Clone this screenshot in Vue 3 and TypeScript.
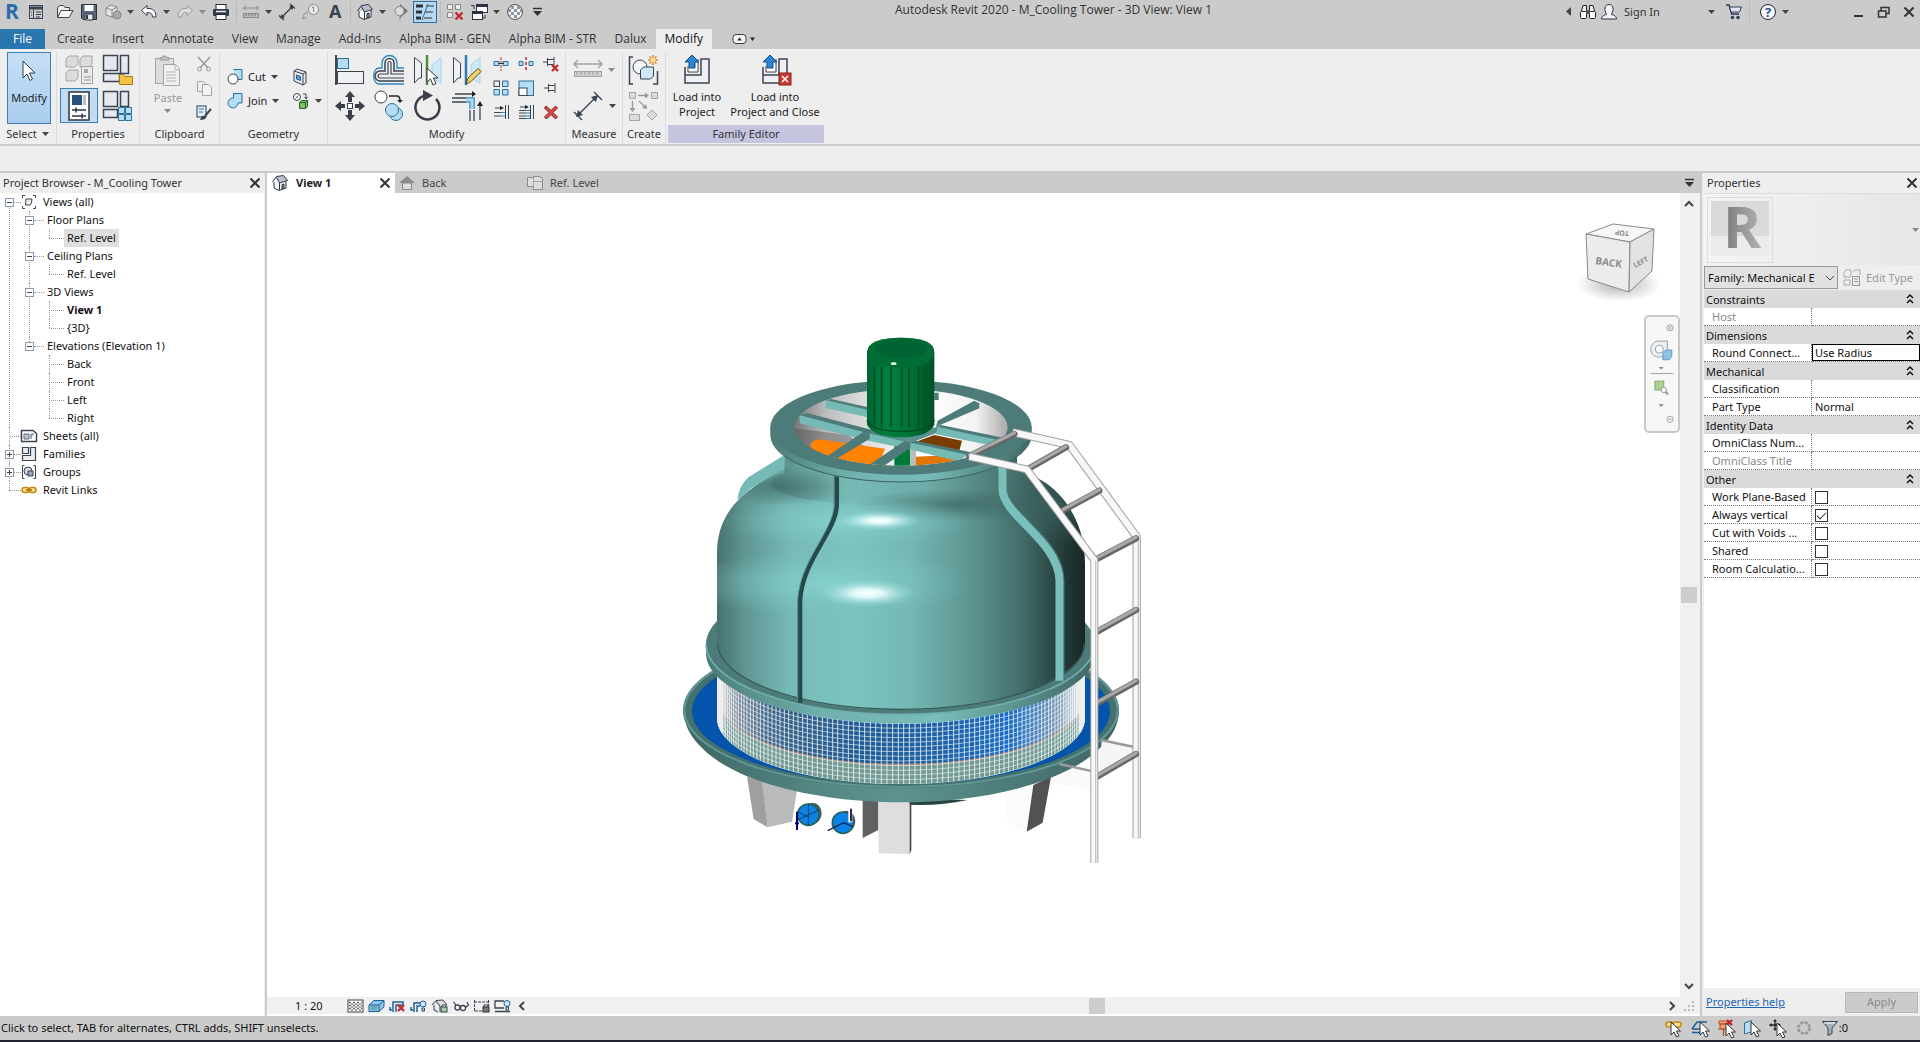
<script setup lang="ts">
import { h, ref } from 'vue'

type IconDef = [number, number, string]

const K = 'fill="none" stroke="#3b4453"'
const B = 'fill="#b4dcf2" stroke="#2b7199"'
const G = 'fill="#dcdcdc" stroke="#a4a4a4"'
const cursor = (x: number, y: number) =>
  `<path transform="translate(${x} ${y})" d="M0 0V13L3 10L5.500 15L8 14L5.500 9H9.500Z" fill="#fff" stroke="#333"/>`
const redX = (x: number, y: number, s: number) =>
  `<path d="M${x} ${y}l${s} ${s}m0 -${s}l-${s} ${s}" stroke="#c3262d" stroke-width="2.400" fill="none"/>`

const icons: Record<string, IconDef> = {
  revit: [18, 20, '<text x="2" y="17" font-family="Open Sans, sans-serif" font-size="21" font-weight="bold" fill="#2a6cab">R</text>'],
  home: [16, 16, `<rect x="1.500" y="1.500" width="13" height="13" ${K}/><path d="M1 4H15" stroke="#3b4453" stroke-width="3"/><path d="M5.500 5V15M8 8h5M8 10.500h5M8 13h4M3 8h1M3 11h1" ${K}/>`],
  open: [18, 16, `<path d="M1.500 13.500V3.500L4 1.500H7.500L9 3.500H13.500V6" fill="#eee" stroke="#3b4453"/><path d="M1.500 13.500L5 6.500H17L13 13.500Z" fill="#f7f7f7" stroke="#3b4453"/>`],
  save: [18, 18, `<path d="M1.500 1.500H16.500V16.500H3L1.500 15Z" fill="#59657a" stroke="#2b3342"/><rect x="4.500" y="2" width="9" height="6" fill="#fff"/><path d="M5 11h8v6H5z" fill="#e8e8e8" stroke="#2b3342"/><path d="M7 12v4" stroke="#2b3342" stroke-width="2"/>`],
  sync: [18, 18, `<path d="M2 5L7 2L13 4V10L8 14L2 12Z" fill="#e4e4e4" stroke="#888"/><path d="M2 5L8 7L13 4M8 7V14" fill="none" stroke="#888"/><circle cx="13" cy="12" r="4" fill="#aaa" stroke="#888"/>`],
  undo: [18, 16, `<path d="M1.500 6.500L7 1.500V4.500C13 4 16 7 16 13H12.500C12.500 9.500 10.500 8.500 7 8.500V11.500Z" fill="#fff" stroke="#333b4a"/>`],
  redo: [18, 16, `<path d="M16.500 6.500L11 1.500V4.500C5 4 2 7 2 13H5.500C5.500 9.500 7.500 8.500 11 8.500V11.500Z" fill="#ddd" stroke="#9a9a9a"/>`],
  print: [18, 18, `<rect x="4" y="1.500" width="10" height="5" fill="#fff" stroke="#222a36"/><rect x="1" y="6" width="16" height="7" rx="1" fill="#333c4a"/><path d="M4 8.500h10" stroke="#eee" stroke-width="1.500"/><path d="M4 11.500h10v5H4z" fill="#fff" stroke="#222a36"/>`],
  ruler: [18, 16, `<path d="M1 4h16M4 1.500L1.500 4L4 6.500M14 1.500L16.500 4L14 6.500" fill="none" stroke="#8a8a8a"/><rect x="1.500" y="9.500" width="15" height="4" fill="#bbb" stroke="#8a8a8a"/><path d="M4 10v2M7 10v2M10 10v2M13 10v2" stroke="#777"/>`],
  dim: [18, 18, `<path d="M3 15L15 3M1 12.500L6 17M12 1L17 5.500" stroke="#333b4a" stroke-width="1.300" fill="none"/><path d="M2.500 15.500l1-4.500l3.500 3.500zM15.500 2.500l-1 4.500l-3.500-3.500z" fill="#333b4a"/>`],
  tag: [18, 18, `<circle cx="11.500" cy="6.500" r="5" fill="#e8e8e8" stroke="#8a8a8a"/><path d="M11.500 4v5M10 5l1.500-1.500M1 16c0-6 2-6 5-6M1 16l3-2" fill="none" stroke="#8a8a8a"/>`],
  textA: [18, 18, '<text x="3" y="15" font-family="Open Sans, sans-serif" font-size="18" font-weight="bold" fill="#39414f">A</text>'],
  house: [18, 18, `<path d="M3 8V14L8 16.500L15 14V7" fill="#f6f6f6" stroke="#2e3643"/><path d="M1.500 8L5.500 2.500L12.500 1.500L16.500 6.500L8.500 9L5.500 3.500" fill="#b8c0ce" stroke="#2e3643"/><path d="M8.500 9V16M11 10.500v4.500l2-1v-4z" fill="#8390a5" stroke="#2e3643"/>`],
  section: [18, 18, `<path d="M8 1L16 8L8 15Z" fill="#777"/><circle cx="7.500" cy="8" r="4.500" fill="#ddd" stroke="#888"/><path d="M8 13v4" stroke="#888"/>`],
  thin: [20, 18, `<path d="M1 3h7M1 9h6M1 15h5" stroke="#2b3342" stroke-width="3"/><path d="M11 3h8M10 9h8M9 15h8" stroke="#2b3342"/><path d="M13 1L7 17" stroke="#2b6aa8"/>`],
  closehid: [18, 18, `<path d="M1.500 1.500h5v5h-5zM9.500 1.500h5v5h-5zM1.500 9.500h5v5h-5z" fill="#ececec" stroke="#888"/>${redX(9.5, 9.5, 7)}`],
  switchw: [18, 18, `<rect x="6.500" y="1.500" width="11" height="8" fill="#fff" stroke="#2b3342"/><path d="M6 3h12" stroke="#2b3342" stroke-width="2"/><rect x="2.500" y="8.500" width="10" height="8" fill="#fff" stroke="#2b3342"/><path d="M2 10h11" stroke="#2b3342" stroke-width="2"/><path d="M4 6V2.500H1M15 12v3h-2" fill="none" stroke="#2b3342"/>`],
  sphere: [18, 18, `<circle cx="9" cy="9" r="7.500" fill="#f4f4f4" stroke="#555"/><path d="M5 3h3v3H5zM11 3h3v3h-3zM2 6h3v3H2zM8 6h3v3H8zM14 6h2v3h-2zM5 9h3v3H5zM11 9h3v3h-3zM3 12h2v2H3zM8 12h3v3H8z" fill="#8d96a5"/>`],
  down: [8, 6, '<path d="M0 1H7L3.500 5Z" fill="#444"/>'],
  downg: [8, 6, '<path d="M0 1H7L3.500 5Z" fill="#8a8a8a"/>'],
  more: [10, 10, '<path d="M0 1.500H9" stroke="#333" stroke-width="1.500"/><path d="M0 4H9L4.500 9Z" fill="#333"/>'],
  leftTri: [6, 10, '<path d="M5 0V9L0 4.500Z" fill="#444"/>'],
  bino: [18, 18, `<path d="M2.500 8L4 2.500H7.500V8M10.500 8V2.500H14L15.500 8" fill="#eee" stroke="#222"/><rect x="1.500" y="8.500" width="6" height="7" rx="1" fill="#fff" stroke="#222"/><rect x="10.500" y="8.500" width="6" height="7" rx="1" fill="#fff" stroke="#222"/><path d="M7 7h4v4H7z" fill="#555"/>`],
  person: [18, 18, `<path d="M1.500 16C1.500 12.500 5 12 6.500 11.500L6 10C4.500 8 4 1.500 9 1.500S13.500 8 12 10L11.500 11.500C13 12 16.500 12.500 16.500 16Z" fill="#f3f4f7" stroke="#2b3342"/>`],
  cart: [18, 18, `<path d="M1 2H4L6.500 11H14" fill="none" stroke="#2b3a5c" stroke-width="1.300"/><path d="M4.500 4H16.500L14.500 9H6Z" fill="#dfe6f2" stroke="#2b3a5c"/><circle cx="7.500" cy="14.500" r="1.700" fill="#2b3a5c"/><circle cx="13" cy="14.500" r="1.700" fill="#2b3a5c"/>`],
  help: [18, 18, `<circle cx="9" cy="9" r="7.500" fill="#f5f7fa" stroke="#223"/><text x="6" y="14" font-family="Open Sans, sans-serif" font-size="13" font-weight="bold" fill="#2c4f94">?</text>`],
  min: [12, 12, '<path d="M1 10H10" stroke="#333" stroke-width="2"/>'],
  restore: [14, 12, `<path d="M4 5V1.500H12V7.500H9" fill="none" stroke="#333" stroke-width="1.500"/><path d="M1.500 5H9V11H1.500Z" fill="none" stroke="#333" stroke-width="1.500"/>`],
  close: [12, 12, '<path d="M1.500 1.500L10.500 10.500M10.500 1.500L1.500 10.500" stroke="#333" stroke-width="2" fill="none"/>'],
  tabmode: [24, 12, `<rect x="1" y="1.500" width="13" height="9" rx="3" fill="#f5f5f5" stroke="#333b4a"/><path d="M5 7.500L7.500 4.500L10 7.500Z" fill="#333"/><path d="M18 4.500h5L20.500 8Z" fill="#222"/>`],
  pointer: [20, 22, '<path d="M4 1V18L8 14L11 20.500L13.500 19L10.500 13H16Z" fill="#fff" stroke="#333b4a"/>'],
  typeprops: [32, 32, `<path d="M2 5l3-3h9v8l-3 3H2zM16 5l3-3h9v8l-3 3h-9zM2 19l3-3h9v8l-3 3H2z" ${G}/><rect x="17.500" y="12.500" width="11" height="17" fill="#eaeaea" stroke="#a4a4a4"/><path d="M20 15h4v4h-4z" fill="#aaa"/><path d="M20 23h7M20 26h7" stroke="#999"/>`],
  famcat: [32, 32, `<path d="M1.500 1.500h14v15h-14zM18.500 1.500h8v18h-8zM1.500 19.500h16v8h-16z" fill="#e6e8ee" stroke="#3b4453" stroke-width="1.500"/><path d="M17.500 30.500v-10h4l1.500 2h7.500v8z" fill="#f6c444" stroke="#a87a18"/>`],
  famtypes: [32, 32, `<path d="M1.500 1.500h14v15h-14zM18.500 1.500h8v15h-8zM1.500 19.500h14v8h-14z" fill="#e6e8ee" stroke="#3b4453" stroke-width="1.500"/><path d="M16.500 17.500h6v6h-6zM23.500 17.500h6v6h-6zM16.500 24.500h6v6h-6zM23.500 24.500h6v6h-6z" ${B}/>`],
  propspal: [24, 30, `<rect x="2" y="1" width="20" height="28" fill="#fff" stroke="#2b3342" stroke-width="1.500"/><rect x="5" y="4" width="10" height="10" fill="#27507e"/><path d="M16 4h3v10h-3z" fill="#b8bec8"/><path d="M5 19h14M5 25h14M9 16.500v5M15 22.500v5" stroke="#2b3342" stroke-width="1.500"/>`],
  paste: [28, 32, `<rect x="1.500" y="3.500" width="18" height="25" ${G}/><path d="M6 5V2.500h3V1h3v1.500h3V5z" fill="#c8c8c8" stroke="#999"/><path d="M9.500 9.500h12l4 4v17h-16z" fill="#f0f0f0" stroke="#a4a4a4"/><path d="M21 9.500v5h5M12 17h10M12 20h10M12 23h10M12 26h10" fill="none" stroke="#b5b5b5"/>`],
  scissors: [16, 16, `<path d="M2 1L12 12M14 1L4 12" stroke="#999" stroke-width="1.500"/><circle cx="3.500" cy="13" r="2" fill="none" stroke="#999"/><circle cx="12.500" cy="13" r="2" fill="none" stroke="#999"/>`],
  copyc: [16, 16, `<path d="M1.500 1.500h6l2 2v8h-8z" fill="#eee" stroke="#a4a4a4"/><path d="M6.500 4.500h6l3 3v8h-9z" fill="#f4f4f4" stroke="#a4a4a4"/>`],
  match: [16, 16, `<rect x="1" y="1" width="9" height="11" fill="#e4f0f9" stroke="#2b3f5c"/><path d="M3 4h5M3 7h4" stroke="#2b6aa8"/><path d="M15 4L9 11" stroke="#3b4453" stroke-width="2"/><path d="M4 15c1-4 3-5 5-4s1 4-5 4z" fill="#3b4453"/>`],
  cutg: [16, 18, `<path d="M6.500 1.500h8.500v10H9" ${B}/><circle cx="6" cy="11" r="5" fill="#fff" stroke="#4b3b44"/>`],
  join: [16, 18, `<path d="M6.500 1.500h8.500v9.500h-4A5 5 0 1 1 6.500 6z" ${B}/>`],
  wall: [16, 18, `<path d="M2 3L5 1L14 4V15L11 17L2 13Z" fill="#e6e8ee" stroke="#3b4453"/><path d="M2 3L11 6V17M11 6L14 4" fill="none" stroke="#3b4453"/><path d="M4.500 7l4 1.500v4l-4-1.500z" fill="#5b9fd0" stroke="#1f5e94"/>`],
  paint: [18, 18, `<circle cx="5" cy="5" r="3.500" fill="#fff" stroke="#3b4453"/><path d="M3.500 6.500l3-3" stroke="#3b4453"/><path d="M11 2h3v4M12.500 5l1.500 2l1.500-2" ${K}/><path d="M7.500 10.500l2-2h6v6l-2 2h-6z" fill="#7fc36b" stroke="#2e5f2a"/><path d="M7.500 10.500h6v6M13.500 10.500l2-2" fill="none" stroke="#2e5f2a"/>`],
  align: [32, 32, `<path d="M2 1V31" stroke="#111" stroke-width="1.500"/><rect x="3.500" y="4.500" width="11" height="10" ${B}/><rect x="3.500" y="17.500" width="26" height="12" fill="#f0f1f5" stroke="#3b4453"/>`],
  offset: [32, 32, `<path d="M31 27H7a5 5 0 0 1 0-10h5V9a4.500 4.500 0 0 1 9 0v8H31" fill="none" stroke="#3b4453" stroke-width="1.500"/><path d="M31 30H6C-1 30-1 14 6 14H9V9a7.500 7.500 0 0 1 15 0v5h7" fill="none" stroke="#2b86bd" stroke-width="1.300"/><path d="M31 24H7a2 2 0 0 1 0-4H15V9a1.500 1.500 0 0 1 3 0v11H31" fill="none" stroke="#3b4453" stroke-width="1.200"/>`],
  mirrorp: [32, 32, `<path d="M2.500 3.500L9.500 9V24H7L2.500 29Z" fill="#eef0f4" stroke="#3b4453"/><path d="M29 3.500L20 11V24L29 29Z" fill="#cfe8f7" stroke="#a8d3ea"/><path d="M15 1V31" stroke="#44913a" stroke-width="2.500"/><path transform="translate(15 14)" d="M0 0V14L3.500 11L6 17L9 15.500L6.500 10H11Z" fill="#fff" stroke="#333"/>`],
  mirrord: [32, 32, `<path d="M2.500 3.500L9.500 9V24H7L2.500 29Z" fill="#eef0f4" stroke="#3b4453"/><path d="M29 3.500L20 11V24L29 29Z" fill="#cfe8f7" stroke="#a8d3ea"/><path d="M15 1V31" stroke="#2b7bb5" stroke-width="2.500"/><path d="M15 30L17 24L27 14.500L30 17.500L20 27.500Z" fill="#f4d567" stroke="#5b4a18"/>`],
  move: [32, 32, `<path d="M16 1L21 7H18V12H14V7H11ZM16 31L21 25H18V20H14V25H11ZM1 16L7 11V14H11V18H7V21ZM31 16L25 11V14H21V18H25V21Z" fill="#3b3f4b"/><rect x="13.500" y="13.500" width="5" height="5" fill="#fff" stroke="#3b3f4b"/>`],
  copym: [32, 32, `<circle cx="8" cy="7" r="6" fill="#fff" stroke="#3b4453"/><path d="M16 6h8q3 0 3 5" fill="none" stroke="#222" stroke-width="1.500"/><path d="M24 10h6l-3 3z" fill="#222"/><circle cx="23" cy="24" r="6.500" ${B}/><circle cx="19" cy="20" r="6.500" ${B}/>`],
  rotate: [32, 32, `<path d="M24 9A12 12 0 1 1 14 5.500" fill="none" stroke="#3b3f4b" stroke-width="2.500"/><path d="M11 0L21 5.500L11 11Z" fill="#3b3f4b"/>`],
  trim: [32, 32, `<path d="M1 8h14M1 12h14" stroke="#3b4453" stroke-width="1.500"/><path d="M15 8h8v11M15 12h4v7" fill="none" stroke="#2b86bd" stroke-width="1.500"/><path d="M15 10h6v9" fill="none" stroke="#a9d8f0" stroke-width="3"/><path d="M19 20v11M23 20v11M4 4h17M29 30V14" stroke="#3b4453" stroke-width="1.300"/><path d="M21 1l4 3l-4 3zM26 16l3-5l3 5z" fill="#222"/>`],
  split: [16, 16, `<path d="M1 5.500h5v4H1zM10 5.500h5v4h-5z" ${B}/><path d="M8 1v14" stroke="#c3262d" stroke-dasharray="3 1"/><path d="M5 7.500h6" stroke="#333"/>`],
  splitgap: [16, 16, `<path d="M1 5.500h4v4H1zM11 5.500h4v4h-4z" ${B}/><path d="M8 1v3M8 6v3M8 11v3" stroke="#c3262d" stroke-width="1.500"/>`],
  unpin: [18, 18, `<path d="M1 7h4M5.500 3v8M5.500 4.500h6M5.500 9.500h6M12 2v10" ${K}/>${redX(10, 10, 6)}`],
  array: [16, 16, `<rect x="1" y="1" width="5.500" height="5.500" ${K}/><path d="M9.500 1H15v5.500H9.500zM1 9.500h5.500V15H1zM9.500 9.500H15V15H9.500z" ${B}/>`],
  scale: [16, 16, `<rect x="1" y="1" width="14.500" height="14.500" ${B}/><rect x="1" y="8" width="8" height="7.500" fill="#fff" stroke="#3b4453"/>`],
  pin: [16, 16, `<path d="M1 8h4M5.500 4v8M5.500 5.500h6M5.500 10.500h6M12 3v10" ${K}/>`],
  trim1: [16, 16, `<path d="M1 8.500h7M1 12h7" ${K}/><path d="M8 8.500h4M8 12h4" stroke="#2b86bd"/><path d="M12.500 1v14M15.500 1v14M2 4h6" ${K}/><path d="M7 2l4 2l-4 2z" fill="#222"/>`],
  trim2: [16, 16, `<path d="M1 6.500h7M1 9h7M1 12h7M1 14.500h7" ${K}/><path d="M8 6.500h4M8 9h4M8 12h4M8 14.500h4" stroke="#2b86bd"/><path d="M12.500 1v14M15.500 1v14M2 3h6" ${K}/><path d="M7 1l4 2l-4 2z" fill="#222"/>`],
  del: [16, 16, '<path d="M3 2L8 6.500L12.500 2L14.500 4L10 8.500L14.500 13L12.500 15L8 10.500L3.500 15L1.500 13L6 8.500L1.500 4Z" fill="#d94a46" stroke="#8f1d1d"/>'],
  measg: [30, 22, `<path d="M1 5h28M5 1L1 5l4 4M25 1l4 4l-4 4" fill="none" stroke="#a4a4a4" stroke-width="1.500"/><rect x="1.500" y="12.500" width="27" height="5" fill="#d0d0d0" stroke="#a4a4a4"/><path d="M4 13v3M8 13v3M12 13v3M16 13v3M20 13v3M24 13v3" stroke="#999"/>`],
  measd: [32, 32, `<path d="M5 26L25 6M2 22l8 8M22 2l8 8" stroke="#3b4453" stroke-width="1.400" fill="none"/><path d="M4 27l2-7l5 5zM26 5l-2 7l-5-5z" fill="#3b4453"/>`],
  create: [32, 32, `<path d="M5 3H1.500V30H5M25 30h4.500V17" fill="none" stroke="#3b4453" stroke-width="1.500"/><circle cx="12" cy="13" r="7" fill="#f3f4f6" stroke="#3b4453"/><path d="M12.500 16l3-3h10v9l-3 3h-10z" fill="#cfe8f7" stroke="#3b4453"/><path d="M25 1v10M20 6h10M21.500 2.500l7 7M28.500 2.500l-7 7" stroke="#e08a2c" stroke-width="1.600"/><circle cx="25" cy="6" r="2.500" fill="#ffd98a"/>`],
  creategrp: [32, 32, `<path d="M1.500 2.500h6v6h-6zM23.500 2.500h6v6h-6zM1.500 24.500h10v6h-10zM24 20l5 5l-5 5l-5-5z" ${G}/><path d="M10 5.500h8M4.500 11v8M11 11l6 6" stroke="#999" stroke-width="1.300"/><path d="M17 2.500l4 3l-4 3zM1.500 18l3 4l3-4zM14 18l5 1l-1-5z" fill="#999"/>`],
  load: [32, 32, `<path d="M4 13v16H28V5H20v16H4" fill="#eef0f4" stroke="#3b4453" stroke-width="1.500"/><path d="M7 12v6h10V5" fill="#fff" stroke="#3b4453"/><path d="M11 1L18 8H14V14H8V8H4Z" fill="#2b86cf" stroke="#124f86"/>`],
  loadc: [32, 32, `<path d="M4 13v16H28V5H20v16H4" fill="#eef0f4" stroke="#3b4453" stroke-width="1.500"/><path d="M7 12v6h10V5" fill="#fff" stroke="#3b4453"/><path d="M11 1L18 8H14V14H8V8H4Z" fill="#2b86cf" stroke="#124f86"/><rect x="20" y="19" width="12" height="12" fill="#c53b34" stroke="#8d1f1a"/><path d="M23 22l6 6m0-6l-6 6" stroke="#fff" stroke-width="1.500"/>`],
  views: [16, 16, `<path d="M4 1.500H1.500V4M12 1.500h2.500V4M4 14.500H1.500V12M12 14.500h2.500V12" ${K}/><path d="M5 5h6q0 5-2 6H4.500Z" fill="#eee" stroke="#3b4453"/>`],
  sheets: [16, 16, `<path d="M.500 2.500H12l3.500 3v8H.500z" fill="#fff" stroke="#3b4453" stroke-width="1.500"/><path d="M3 11V6h5v5zM10 11V6h3" fill="#b9c3d4" stroke="#5c6a80"/>`],
  fams: [16, 16, `<path d="M1.500 1.500h6v6h-6zM9.500 1.500h5v13h-13v-5h8z" fill="#e9ebf0" stroke="#3b4453" stroke-width="1.200"/>`],
  groups: [16, 16, `<path d="M3.500 1.500h-2v13h2M12.500 1.500h2v13h-2" ${K}/><circle cx="7" cy="7" r="4" fill="#d5dae3" stroke="#3b4453"/><path d="M7 7h5v5H7z" fill="#9aa5b8" stroke="#3b4453"/>`],
  links: [16, 16, `<rect x="1" y="5.500" width="7" height="5" rx="2.500" fill="#ffe08a" stroke="#c98a14" stroke-width="1.500"/><rect x="8" y="5.500" width="7" height="5" rx="2.500" fill="#ffe08a" stroke="#c98a14" stroke-width="1.500"/><path d="M5 8h6" stroke="#9a6808" stroke-width="1.500"/>`],
  backv: [16, 16, '<path d="M8 1L16 8H0Z" fill="#8a8a8a"/><path d="M3.500 8h9v6.500h-9z" fill="#ddd" stroke="#8a8a8a"/>'],
  planv: [16, 16, '<path d="M.500 2.500h6v-1h6l3 2v11h-9v-3h-6z" fill="#ddd" stroke="#8a8a8a"/><path d="M6.500 2.500v9M6.500 6.500h8" fill="none" stroke="#8a8a8a" stroke-dasharray="2 1"/>'],
  edittype: [18, 18, `<path d="M1 3l2-2h5v5l-1 2H1zM10 3l2-2h5v5M1 11h6v5H1z" fill="none" stroke="#aaa"/><rect x="9.500" y="7.500" width="7" height="9" fill="#eee" stroke="#999"/><path d="M11 10h4M11 12.500h4" stroke="#999"/>`],
  up: [10, 8, '<path d="M1 6L5 2L9 6" stroke="#444" stroke-width="2" fill="none"/>'],
  dn: [10, 8, '<path d="M1 2L5 6L9 2" stroke="#444" stroke-width="2" fill="none"/>'],
  thinDn: [10, 8, '<path d="M1 2L5 6L9 2" stroke="#444" fill="none"/>'],
  lt: [8, 10, '<path d="M6 1L2 5L6 9" stroke="#444" stroke-width="2" fill="none"/>'],
  rt: [8, 10, '<path d="M2 1L6 5L2 9" stroke="#444" stroke-width="2" fill="none"/>'],
  chev: [10, 12, '<path d="M2 5L5 2L8 5M2 10L5 7L8 10" stroke="#111" stroke-width="1.500" fill="none"/>'],
  detail: [17, 14, `<rect x="1" y="1" width="15" height="12" fill="#fff" stroke="#3b4453"/><path d="M2 3.500h13M2 6.500h13M2 9.500h13" stroke="#666" stroke-width="1.500" stroke-dasharray="2 2"/><path d="M4 5h11M4 8h11M4 11h11" stroke="#888" stroke-width="1.500" stroke-dasharray="2 2"/>`],
  vstyle: [17, 14, `<path d="M1 6L6 1.500H16V8L11 12.500H1Z" fill="#8cc7ea" stroke="#1f5e94"/><path d="M1 6H11V12.500M11 6L16 1.500" fill="none" stroke="#1f5e94"/><path d="M3 8h6M3 10h6" stroke="#3b8a5a"/>`],
  cropx: [17, 14, `<path d="M1 8v3h2M4 13V3h10v3M7 13V6h7" fill="none" stroke="#1f5e94" stroke-width="1.500"/>${redX(9, 6, 6)}`],
  cropv: [17, 14, `<path d="M1 8v3h2M4 13V4h6M7 13V7h3" fill="none" stroke="#1f5e94" stroke-width="1.500"/><circle cx="13" cy="5" r="3" fill="#cfe8f7" stroke="#1f5e94"/><path d="M12 9h2.500v3H12z" fill="#cde" stroke="#345"/>`],
  lock3d: [17, 14, `<path d="M1 6L5 1.500L12 1L16 6M3 6V11L7 13M5 2L9 7V13" fill="#ddd" stroke="#3b4453"/><rect x="10" y="8" width="6" height="5" fill="#9fcf9f" stroke="#345"/><path d="M11 8V6h4v2" fill="none" stroke="#345"/>`],
  glasses: [17, 14, `<path d="M1 3c2 0 2 2 3 4M15 3l1.500 3L13 9" ${K} stroke-width="1.200"/><circle cx="5.500" cy="8.500" r="2.500" fill="#fff" stroke="#3b4453" stroke-width="1.300"/><circle cx="11" cy="9" r="2.500" fill="#fff" stroke="#3b4453" stroke-width="1.300"/>`],
  constr: [17, 14, `<path d="M1.500 1v12M15.500 1v6M1 3h15M2 12h7" ${K} stroke-dasharray="3 1"/><rect x="10" y="8" width="6" height="5" fill="#777" stroke="#333"/><path d="M11 8V6h4v2" fill="none" stroke="#333"/>`],
  reveal: [17, 14, `<path d="M10 2H1v7h9M1 12.500h15" ${K} stroke-width="1.300"/><circle cx="13" cy="4.500" r="3" fill="#cfe8f7" stroke="#1f5e94"/><path d="M12 8h2.500v3H12z" fill="#cde" stroke="#345"/>`],
  slink: [18, 18, `<rect x="1" y="3" width="8" height="5" rx="2.500" fill="#ffe08a" stroke="#c98a14" stroke-width="1.500"/><rect x="8" y="3" width="8" height="5" rx="2.500" fill="#ffe08a" stroke="#c98a14" stroke-width="1.500"/>${cursor(6, 3)}`],
  sunder: [18, 18, `<path d="M1 10L6 3H16M1 13.500h8M1 10h9" fill="none" stroke="#1f5e94" stroke-width="1.500"/>${cursor(9, 3)}`],
  spin: [18, 18, `<path d="M2 2h9v3H2zM3 5h7v5H3zM1 10h11" fill="#f2a27a" stroke="#b3501e"/><path d="M6.500 10v7" stroke="#b3501e" stroke-width="1.500"/>${redX(10, 1, 5)}${cursor(9, 4)}`],
  sface: [18, 18, `<path d="M1.500 4L8.500 1.500V13L1.500 15Z" ${B}/>${cursor(8, 3)}`],
  sdrag: [18, 18, `<path d="M6 1v10M1 6h10" stroke="#222" stroke-width="1.300"/><path d="M6 0l2 2.500H4zM6 12l2-2.500H4zM0 6l2.500-2v4zM12 6L9.500 4v4z" fill="#222"/>${cursor(8, 4)}`],
  gear: [16, 16, '<circle cx="8" cy="8" r="5.500" fill="none" stroke="#999" stroke-width="3" stroke-dasharray="3 1.300"/>'],
  filter: [18, 18, `<path d="M1.500 2.500h15L11 9v5.500l-4 2V9Z" fill="#a7b0bd" stroke="#3b4453"/><path d="M3 4h11" stroke="#fff"/>`],
}

const Ico = (p: { n: string }) => {
  const [w, hh, body] = icons[p.n]
  return h('svg', { width: w, height: hh, viewBox: `0 0 ${w} ${hh}`, class: 'ico', 'aria-hidden': 'true', innerHTML: body })
}
Ico.props = ['n']

type Qat = { n: string; k?: 'arrow' | 'sep' | 'on' | 'end' | 'gap'; t?: string }
const qat: Qat[] = [
  { n: 'revit', t: 'Revit' }, { n: 'home', t: 'Home' }, { n: 'open', t: 'Open', k: 'gap' }, { n: 'save', t: 'Save' }, { n: 'sync', t: 'Synchronize' },
  { n: 'down', k: 'arrow' }, { n: 'undo', t: 'Undo' }, { n: 'down', k: 'arrow' }, { n: 'redo', t: 'Redo' }, { n: 'downg', k: 'arrow' },
  { n: 'print', t: 'Print' }, { n: '', k: 'sep' }, { n: 'ruler', t: 'Measure' }, { n: 'down', k: 'arrow' }, { n: 'dim', t: 'Aligned Dimension' },
  { n: 'tag', t: 'Tag' }, { n: 'textA', t: 'Text' }, { n: '', k: 'sep' }, { n: 'house', t: 'Default 3D View' }, { n: 'down', k: 'arrow' },
  { n: 'section', t: 'Section' }, { n: 'thin', t: 'Thin Lines', k: 'on' }, { n: '', k: 'sep' }, { n: 'closehid', t: 'Close Inactive Views' },
  { n: 'switchw', t: 'Switch Windows' }, { n: 'down', k: 'arrow' }, { n: 'sphere', t: 'Render' }, { n: 'more', k: 'end', t: 'Customize' },
]

const tabs = ['Create', 'Insert', 'Annotate', 'View', 'Manage', 'Add-Ins', 'Alpha BIM - GEN', 'Alpha BIM - STR', 'Dalux', 'Modify']
const modBig = ['align', 'offset', 'mirrorp', 'mirrord', 'move', 'copym', 'rotate', 'trim']
const modSmall = ['split', 'splitgap', 'unpin', 'array', 'scale', 'pin', 'trim1', 'trim2', 'del']

type Node = { t: string; icon?: string; open?: boolean; box?: boolean; sel?: boolean; bold?: boolean; kids?: Node[] }
const tree: Node[] = [
  {
    t: 'Views (all)', icon: 'views', box: true, open: true, kids: [
      { t: 'Floor Plans', kids: [{ t: 'Ref. Level', sel: true }] },
      { t: 'Ceiling Plans', kids: [{ t: 'Ref. Level' }] },
      { t: '3D Views', kids: [{ t: 'View 1', bold: true }, { t: '{3D}' }] },
      { t: 'Elevations (Elevation 1)', kids: [{ t: 'Back' }, { t: 'Front' }, { t: 'Left' }, { t: 'Right' }] },
    ],
  },
  { t: 'Sheets (all)', icon: 'sheets' },
  { t: 'Families', icon: 'fams', box: true },
  { t: 'Groups', icon: 'groups', box: true },
  { t: 'Revit Links', icon: 'links' },
]

type Prop = { k: string; v?: string; dim?: boolean; active?: boolean; check?: boolean }
const groups = ref<{ g: string; rows: Prop[] }[]>([
  { g: 'Constraints', rows: [{ k: 'Host', dim: true }] },
  { g: 'Dimensions', rows: [{ k: 'Round Connect...', v: 'Use Radius', active: true }] },
  { g: 'Mechanical', rows: [{ k: 'Classification' }, { k: 'Part Type', v: 'Normal' }] },
  { g: 'Identity Data', rows: [{ k: 'OmniClass Num...' }, { k: 'OmniClass Title', dim: true }] },
  {
    g: 'Other', rows: [
      { k: 'Work Plane-Based', check: false }, { k: 'Always vertical', check: true }, { k: 'Cut with Voids ...', check: false },
      { k: 'Shared', check: false }, { k: 'Room Calculatio...', check: false },
    ],
  },
])

const viewTools = ['detail', 'vstyle', 'cropx', 'cropv', 'lock3d', 'glasses', 'constr', 'reveal']
const selTools = ['slink', 'sunder', 'spin', 'sface', 'sdrag', 'gear', 'filter']

// Air-inlet mesh: vertical wires spaced evenly round the front half of the drum, and level hoops.
const verticals = Array.from({ length: 104 }, (_, i) => {
  const a = (Math.PI * i) / 103
  const x = Math.round(720 + 552 * Math.cos(a))
  const y = Math.round(1194 + 199 * Math.sin(a))
  return `M${x} ${y}V${y - 200}`
}).join('')
const hoops = Array.from({ length: 15 }, (_, i) => `M168 ${1194 - i * 14}A552 199 0 0 0 1272 ${1194 - i * 14}`).join('')
const rungs = [
  [925, 408, 1060, 342], [1105, 445, 1215, 382], [1205, 572, 1315, 512], [1305, 718, 1425, 655],
  [1308, 935, 1425, 870], [1308, 1150, 1425, 1085], [1308, 1370, 1425, 1302],
]
const fins = [640, 662, 690, 722, 744, 772, 790, 806]
</script>

<template>
  <div class="app">
    <header class="title">
      <div class="qat">
        <template v-for="(q, i) in qat" :key="i">
          <span v-if="q.k === 'sep'" class="qsep"></span>
          <button v-else type="button" :class="['q', q.k]" :aria-label="q.t ?? 'More'"><Ico :n="q.n" /></button>
        </template>
      </div>
      <h1>Autodesk Revit 2020 - M_Cooling Tower - 3D View: View 1</h1>
      <div class="account">
        <Ico n="leftTri" />
        <button type="button" class="q find" aria-label="Search"><Ico n="bino" /></button>
        <button type="button" class="sign"><Ico n="person" />Sign In</button>
        <button type="button" class="q arrow" aria-label="Account menu"><Ico n="down" /></button>
        <button type="button" class="q shop" aria-label="App Store"><Ico n="cart" /></button>
        <span class="qsep"></span>
        <button type="button" class="q shop" aria-label="Help"><Ico n="help" /></button>
        <button type="button" class="q arrow" aria-label="Help menu"><Ico n="down" /></button>
      </div>
      <div class="win">
        <button type="button" aria-label="Minimize"><Ico n="min" /></button>
        <button type="button" aria-label="Restore"><Ico n="restore" /></button>
        <button type="button" aria-label="Close"><Ico n="close" /></button>
      </div>
    </header>

    <nav class="tabs">
      <button type="button" class="file">File</button>
      <button v-for="t in tabs" :key="t" type="button" :class="{ on: t === 'Modify' }">{{ t }}</button>
      <button type="button" class="mode" aria-label="Ribbon display"><Ico n="tabmode" /></button>
    </nav>

    <section class="ribbon">
      <div class="panel select">
        <div class="body"><button type="button" class="modify"><Ico n="pointer" /><span>Modify</span></button></div>
        <div class="plabel">Select <Ico n="down" /></div>
      </div>
      <div class="panel props">
        <div class="body grid2">
          <button type="button" aria-label="Type Properties"><Ico n="typeprops" /></button>
          <button type="button" aria-label="Family Category"><Ico n="famcat" /></button>
          <button type="button" class="on" aria-label="Properties"><Ico n="propspal" /></button>
          <button type="button" aria-label="Family Types"><Ico n="famtypes" /></button>
        </div>
        <div class="plabel">Properties</div>
      </div>
      <div class="panel clip">
        <div class="body row">
          <button type="button" class="tall off"><Ico n="paste" /><span>Paste</span><Ico n="downg" /></button>
          <div class="stack3">
            <button type="button" aria-label="Cut"><Ico n="scissors" /></button>
            <button type="button" aria-label="Copy"><Ico n="copyc" /></button>
            <button type="button" aria-label="Match"><Ico n="match" /></button>
          </div>
        </div>
        <div class="plabel">Clipboard</div>
      </div>
      <div class="panel geom">
        <div class="body geo">
          <button type="button"><Ico n="cutg" /><span>Cut</span><Ico n="down" /></button>
          <button type="button" aria-label="Wall Opening"><Ico n="wall" /></button>
          <button type="button"><Ico n="join" /><span>Join</span><Ico n="down" /></button>
          <button type="button" aria-label="Paint"><Ico n="paint" /><Ico n="down" /></button>
        </div>
        <div class="plabel">Geometry</div>
      </div>
      <div class="panel mod">
        <div class="body row">
          <div class="grid4"><button v-for="n in modBig" :key="n" type="button" :aria-label="n"><Ico :n="n" /></button></div>
          <div class="grid3"><button v-for="n in modSmall" :key="n" type="button" :aria-label="n"><Ico :n="n" /></button></div>
        </div>
        <div class="plabel">Modify</div>
      </div>
      <div class="panel meas">
        <div class="body two">
          <button type="button" aria-label="Measure"><Ico n="measg" /><Ico n="downg" /></button>
          <button type="button" aria-label="Dimension"><Ico n="measd" /><Ico n="down" /></button>
        </div>
        <div class="plabel">Measure</div>
      </div>
      <div class="panel crea">
        <div class="body two">
          <button type="button" aria-label="Create"><Ico n="create" /></button>
          <button type="button" aria-label="Create Group"><Ico n="creategrp" /></button>
        </div>
        <div class="plabel">Create</div>
      </div>
      <div class="panel fam">
        <div class="body row">
          <button type="button" class="tall"><Ico n="load" /><span>Load into<br />Project</span></button>
          <button type="button" class="tall"><Ico n="loadc" /><span>Load into<br />Project and Close</span></button>
        </div>
        <div class="plabel">Family Editor</div>
      </div>
    </section>
    <div class="options"></div>

    <main class="work">
      <aside class="browser">
        <header class="phead"><h2>Project Browser - M_Cooling Tower</h2><button type="button" aria-label="Close browser"><Ico n="close" /></button></header>
        <ul class="tree">
          <li v-for="a in tree" :key="a.t">
            <div class="node"><span v-if="a.box" :class="['tog', { plus: !a.open }]"></span><i :class="a.box ? 's7' : 's12'"></i><Ico :n="a.icon!" /><span class="lb top">{{ a.t }}</span></div>
            <ul v-if="a.kids">
              <li v-for="b in a.kids" :key="b.t">
                <div class="node"><span class="tog"></span><i class="s10"></i><span class="lb">{{ b.t }}</span></div>
                <ul>
                  <li v-for="c in b.kids" :key="c.t">
                    <div class="node"><i class="s15"></i><span :class="['lb', { sel: c.sel, bold: c.bold }]">{{ c.t }}</span></div>
                  </li>
                </ul>
              </li>
            </ul>
          </li>
        </ul>
      </aside>

      <section class="view">
        <div class="vtabs">
          <div class="vtab on"><Ico n="house" /><span>View 1</span><button type="button" aria-label="Close view"><Ico n="close" /></button></div>
          <div class="vtab"><Ico n="backv" /><span>Back</span></div>
          <div class="vtab"><Ico n="planv" /><span>Ref. Level</span></div>
          <button type="button" class="vmore" aria-label="Tab list"><Ico n="more" /></button>
        </div>
        <div class="stage">
          <div class="canvas">
            <svg class="scene" viewBox="267 193 1411 804" role="img" aria-label="Cooling tower">
              <defs>
                <linearGradient id="shell"><stop offset="0" stop-color="#48726f" /><stop offset=".08" stop-color="#5f9794" /><stop offset=".2" stop-color="#76bab6" /><stop offset=".36" stop-color="#7cc4c0" /><stop offset=".52" stop-color="#74b8b4" /><stop offset=".7" stop-color="#5b928f" /><stop offset=".83" stop-color="#436c6a" /><stop offset=".93" stop-color="#263f3d" /><stop offset="1" stop-color="#182625" /></linearGradient>
                <linearGradient id="ringside"><stop offset="0" stop-color="#4c7b79" /><stop offset=".3" stop-color="#70b1ad" /><stop offset=".6" stop-color="#78bdb9" /><stop offset="1" stop-color="#3f6664" /></linearGradient>
                <linearGradient id="neck"><stop offset="0" stop-color="#5c928f" /><stop offset=".3" stop-color="#76bab6" /><stop offset=".6" stop-color="#6caba7" /><stop offset="1" stop-color="#3e6462" /></linearGradient>
                <linearGradient id="basin"><stop offset="0" stop-color="#3d6563" /><stop offset=".3" stop-color="#548683" /><stop offset=".5" stop-color="#5c9390" /><stop offset="1" stop-color="#3e6462" /></linearGradient>
                <linearGradient id="hole"><stop offset="0" stop-color="#777" /><stop offset=".15" stop-color="#bdbdbd" /><stop offset=".3" stop-color="#d8d8d8" /><stop offset=".6" stop-color="#fff" /><stop offset=".85" stop-color="#f4f4f4" /><stop offset="1" stop-color="#aaa" /></linearGradient>
                <linearGradient id="inlet"><stop offset="0" stop-color="#ddd" /><stop offset=".05" stop-color="#7d8b98" /><stop offset=".15" stop-color="#3c6486" /><stop offset=".4" stop-color="#1f5b95" /><stop offset=".65" stop-color="#1d63ad" /><stop offset=".8" stop-color="#1a6cc6" /><stop offset=".93" stop-color="#7d9ab5" /><stop offset="1" stop-color="#f2f2f2" /></linearGradient>
                <linearGradient id="motor"><stop offset="0" stop-color="#006633" /><stop offset=".3" stop-color="#00803f" /><stop offset=".6" stop-color="#007539" /><stop offset="1" stop-color="#005227" /></linearGradient>
                <radialGradient id="glow"><stop offset="0" stop-color="#fff" /><stop offset=".3" stop-color="#e8fdfd" stop-opacity=".9" /><stop offset="1" stop-color="#8edbd8" stop-opacity="0" /></radialGradient>
                <radialGradient id="soft"><stop offset="0" stop-color="#86d2ce" stop-opacity=".9" /><stop offset="1" stop-color="#7cc4c0" stop-opacity="0" /></radialGradient>
                <radialGradient id="shade"><stop offset="0" stop-color="#3c6361" stop-opacity=".7" /><stop offset="1" stop-color="#3c6361" stop-opacity="0" /></radialGradient>
                <clipPath id="holeclip"><ellipse cx="720" cy="322" rx="320" ry="115" /></clipPath>
                <clipPath id="inclip"><path d="M168 950V1194A552 199 0 0 0 1272 1194V950Z" /></clipPath>
                <clipPath id="shellclip"><path d="M370 400V445C300 490 168 540 168 700V971A552 199 0 0 0 1272 971V730C1272 600 1200 510 1130 475L1068 440V400Z" /></clipPath>
              </defs>
              <g transform="translate(660 320) scale(.33333)">
                <path d="M1190 1335L1290 1355V1410L1165 1390Z" fill="#fafafa" />
                <path d="M1030 1420L1117 1395L1097 1535L1040 1510Z" fill="#fbfbfb" />
                <path d="M1117 1395L1170 1370L1145 1508L1097 1535Z" fill="#525252" />
                <path d="M258 1370L305 1380L320 1522L278 1497Z" fill="#9f9f9f" />
                <path d="M300 1370L410 1400L393 1505L320 1522Z" fill="#bababa" />
                <path d="M605 1435H652V1530L605 1554Z" fill="#606060" />
                <path d="M600 1430Q760 1475 920 1440Z" fill="#2a4341" />
                <path d="M652 1435H746V1602L653 1600Z" fill="#dedede" />
                <path d="M746 1440H751V1590L746 1602Z" fill="#444" />
                <path d="M66 1165C70 1230 100 1265 140 1300C260 1400 500 1447 720 1447S1180 1400 1300 1300C1340 1265 1374 1230 1374 1165Z" fill="url(#basin)" />
                <ellipse cx="720" cy="1170" rx="654" ry="235" fill="#44706d" />
                <ellipse cx="720" cy="1170" rx="650" ry="231" fill="none" stroke="#5f9794" stroke-width="6" />
                <ellipse cx="720" cy="1173" rx="627" ry="218" fill="#0554ac" />
                <path d="M168 950V1194A552 199 0 0 0 1272 1194V950Z" fill="url(#inlet)" />
                <g clip-path="url(#inclip)">
                  <path d="M168 1135A552 199 0 0 0 1272 1135V1420H168Z" fill="#729a93" />
                  <path d="M168 1135A552 199 0 0 0 1272 1135" fill="none" stroke="#a58a78" stroke-width="5" />
                  <path :d="verticals" stroke="#fff" stroke-width="3" stroke-opacity=".8" fill="none" />
                  <path :d="hoops" stroke="#e6f3fa" stroke-width="3" stroke-opacity=".65" fill="none" />
                  <path d="M168 950h18v450h-18zM1254 950h18v450h-18z" fill="#eee" />
                </g>
                <path d="M135 975V1000A583 210 0 0 0 1301 1000V975Z" fill="url(#ringside)" />
                <ellipse cx="718" cy="973" rx="583" ry="210" fill="#4c7b79" />
                <path d="M135 973A583 210 0 0 0 1301 973" fill="none" stroke="#6fb0ac" stroke-width="5" />
                <path d="M370 405L262 472Q232 500 230 540L270 505L372 445Z" fill="#76bab6" />
                <g clip-path="url(#shellclip)">
                  <rect x="168" y="400" width="1104" height="790" fill="url(#shell)" />
                  <rect x="370" y="400" width="698" height="120" fill="url(#neck)" />
                  <ellipse cx="720" cy="490" rx="390" ry="70" fill="url(#neck)" />
                  <ellipse cx="360" cy="500" rx="190" ry="60" fill="url(#shade)" />
                  <ellipse cx="900" cy="555" rx="320" ry="50" fill="url(#shade)" />
                  <ellipse cx="1180" cy="560" rx="180" ry="120" fill="url(#shade)" />
                  <ellipse cx="560" cy="605" rx="380" ry="75" fill="url(#soft)" />
                  <ellipse cx="500" cy="790" rx="440" ry="100" fill="url(#soft)" />
                  <ellipse cx="655" cy="602" rx="130" ry="30" fill="url(#glow)" />
                  <ellipse cx="620" cy="820" rx="150" ry="42" fill="url(#glow)" />
                  <path d="M168 971A552 199 0 0 0 1272 971" fill="none" stroke="#365957" stroke-width="8" />
                </g>
                <path d="M527 460V560C520 640 425 720 417 840V1148" fill="none" stroke="#264a49" stroke-width="14" />
                <path d="M519 470V560C512 640 418 720 410 840V1145" fill="none" stroke="#5c928f" stroke-width="3" />
                <path d="M1025 435V510C1030 590 1190 660 1196 780V1082" fill="none" stroke="#79c0bc" stroke-width="25" />
                <path d="M1038 440V512C1045 580 1204 650 1209 780V1080" fill="none" stroke="#4a7876" stroke-width="3" />
                <path d="M328 322V346A392 142 0 0 0 1112 346V322Z" fill="url(#ringside)" />
                <path d="M370 408A392 142 0 0 0 1070 408" fill="none" stroke="#38605e" stroke-width="3" />
                <ellipse cx="720" cy="322" rx="392" ry="142" fill="#4c7b79" />
                <ellipse cx="720" cy="322" rx="320" ry="115" fill="url(#hole)" />
                <g clip-path="url(#holeclip)">
                  <path d="M400 325L560 345L640 400L480 440L400 380Z" fill="#555" fill-opacity=".45" />
                  <path d="M448 372Q460 355 490 360L672 386L650 440H520L452 390Z" fill="#ff8200" />
                  <path d="M765 365L820 345L903 362L895 392L800 385Z" fill="#7a3d00" />
                  <path d="M765 410L870 405L900 425L760 445Z" fill="#e27400" />
                  <path d="M700 375H748V445H700Z" fill="#007a3b" />
                  <path d="M750 375h15v60h-15z" fill="#bbb" />
                  <path d="M493 240L620 265V292L493 264Z" fill="#76bab6" /><path d="M493 240L510 237L622 262V270Z" fill="#4c7b79" />
                  <path d="M415 285L615 334L750 365L925 402L890 424L745 388L600 358L417 310Z" fill="#76bab6" />
                  <path d="M415 285L440 280L625 328L755 360L930 397L920 404L750 368L610 337Z" fill="#4c7b79" />
                  <path d="M825 320L1015 358L985 375L825 343Z" fill="#76bab6" /><path d="M825 320L840 315L1020 352V362Z" fill="#4c7b79" />
                  <path d="M830 302L940 242L955 250V265L825 320Z" fill="#4c7b79" /><path d="M820 218h13v22h-13z" fill="#4c7b79" />
                  <path d="M500 408L610 334L626 340V356L530 415Z" fill="#4c7b79" />
                  <path d="M625 434L735 360L748 368V384L665 440Z" fill="#4c7b79" />
                  <path d="M625 335L830 322L825 340L750 368Z" fill="#5b928f" />
                </g>
                <path d="M618 95Q622 53 720 53T820 95V315Q800 352 720 352T618 315Z" fill="url(#motor)" />
                <path v-for="x in fins" :key="x" :d="`M${x} 140V322`" stroke="#00542a" stroke-width="6" />
                <path d="M618 98Q625 143 720 143T820 98Q815 53 720 53T618 98Z" fill="#006d36" />
                <ellipse cx="720" cy="86" rx="80" ry="28" fill="#006332" />
                <ellipse cx="698" cy="131" rx="9" ry="4" fill="#e6fff0" />
                <path d="M618 300Q630 334 720 334T820 300" fill="none" stroke="#004a24" stroke-width="4" />
                <path d="M1322 1262L1420 1282V1310L1315 1350Z" fill="#f5f5f5" />
                <path d="M1320 1260L1420 1281M1195 1332L1300 1355" stroke="#999" stroke-width="7" />
                <g fill="none" stroke-linejoin="round">
                  <path d="M1055 337L1225 375L1427 650V1555" stroke="#a0a0a0" stroke-width="25" />
                  <path d="M1055 337L1225 375L1427 650V1555" stroke="#f7f7f7" stroke-width="19" />
                  <path d="M1432 652V1555" stroke="#c6c6c6" stroke-width="4" />
                  <g v-for="r in rungs" :key="r[1]" stroke-linecap="round">
                    <path :d="`M${r[0]} ${r[1]}L${r[2]} ${r[3]}`" stroke="#666" stroke-width="19" />
                    <path :d="`M${r[0]} ${r[1] - 3}L${r[2]} ${r[3] - 3}`" stroke="#a8a8a8" stroke-width="10" />
                  </g>
                  <path d="M925 410L1097 448L1300 720V1628" stroke="#a0a0a0" stroke-width="24" />
                  <path d="M925 410L1097 448L1300 720V1628" stroke="#f9f9f9" stroke-width="18" />
                  <path d="M1304 722V1628" stroke="#c6c6c6" stroke-width="4" />
                </g>
                <ellipse cx="455" cy="1480" rx="27" ry="32" fill="#4b5f62" /><circle cx="442" cy="1484" r="32" fill="#0b83e6" stroke="#23645a" stroke-width="5" />
                <path d="M442 1452V1516M410 1500L474 1470M410 1475L440 1490" stroke="#123d6b" stroke-width="3" /><path d="M408 1475V1530M402 1510h12" stroke="#000070" stroke-width="6" />
                <ellipse cx="556" cy="1504" rx="27" ry="32" fill="#6b4a55" /><circle cx="546" cy="1508" r="32" fill="#0b83e6" stroke="#23645a" stroke-width="5" />
                <path d="M500 1532L548 1508L575 1520" fill="none" stroke="#10204b" stroke-width="4" /><path d="M562 1465h12v42h-12z" fill="#fff" /><path d="M570 1466V1504" stroke="#000040" stroke-width="5" />
              </g>
            </svg>
            <button type="button" class="cube" aria-label="View cube">
              <svg width="86" height="86" viewBox="0 0 86 86">
                <defs><radialGradient id="csh"><stop offset="0" stop-color="#888" stop-opacity=".7" /><stop offset="1" stop-color="#999" stop-opacity="0" /></radialGradient></defs>
                <ellipse cx="42" cy="63" rx="42" ry="18" fill="url(#csh)" />
                <path d="M9 13L36 3L77 8L53 21Z" fill="#f6f6f6" stroke="#888" />
                <path d="M9 13L53 21L52 71L11 58Z" fill="#ececec" stroke="#888" />
                <path d="M53 21L77 8L75 50L52 71Z" fill="#e2e2e2" stroke="#888" />
                <g font-family="Open Sans, sans-serif" font-weight="bold" fill="#8a8a8a">
                  <text x="18" y="43" font-size="10" transform="rotate(8 18 43)">BACK</text>
                  <text x="58" y="47" font-size="7" transform="rotate(-28 58 47)">LEFT</text>
                  <text x="52" y="10" font-size="7" transform="rotate(184 52 10)">TOP</text>
                </g>
              </svg>
            </button>
            <div class="navbar">
              <svg width="36" height="118" viewBox="0 0 36 118" aria-hidden="true">
                <g fill="none" stroke="#999"><circle cx="27" cy="7" r="3.500" /><path d="M25 5l4 4m0-4l-4 4" /><circle cx="27" cy="110" r="3.500" /><path d="M25 110h4M5 58.500h26" /></g>
                <path d="M24 31V22H14A9 9 0 1 0 20 38" fill="#eef0f3" stroke="#8d95a3" /><circle cx="15" cy="31" r="4.500" fill="#fff" stroke="#8d95a3" />
                <path d="M19 35l3-3h7v7l-3 4h-7z" fill="#8fc3e6" stroke="#5b92b8" /><path d="M14 51h6l-3 3zM14 93h6l-3 3z" fill="#888" />
                <rect x="10" y="67" width="10" height="10" fill="#a9d18f" stroke="#7fa36b" /><circle cx="20" cy="77" r="3" fill="#fff" stroke="#888" /><path d="M22 79l3 3" stroke="#888" stroke-width="2" />
              </svg>
            </div>
          </div>
          <div class="vscroll"><Ico n="up" /><span class="thumb"></span><Ico n="dn" /></div>
        </div>
        <div class="vbar">
          <span class="scale">1 : 20</span>
          <button v-for="n in viewTools" :key="n" type="button" :aria-label="n"><Ico :n="n" /></button>
          <div class="hscroll"><Ico n="lt" /><span class="thumb"></span><Ico n="rt" /></div>
          <svg class="grip" width="20" height="12" viewBox="0 0 20 12" aria-hidden="true"><path d="M12 1h2v2h-2zM8 5h2v2H8zM12 5h2v2h-2zM4 9h2v2H4zM8 9h2v2H8zM12 9h2v2h-2z" fill="#bbb" /></svg>
        </div>
      </section>

      <aside class="palette">
        <header class="phead"><h2>Properties</h2><button type="button" aria-label="Close properties"><Ico n="close" /></button></header>
        <div class="type">
          <div class="thumbnail">
            <svg width="64" height="64" viewBox="0 0 64 64" aria-hidden="true">
              <defs><linearGradient id="logo" x2="1" y2="0"><stop offset="0" stop-color="#777" /><stop offset=".3" stop-color="#8d8d8d" /><stop offset="1" stop-color="#b2b2b2" /></linearGradient></defs>
              <rect x="3" y="3" width="58" height="35" fill="#dadada" /><rect x="3" y="38" width="58" height="20" fill="#ebebeb" />
              <text x="15" y="50" font-family="Open Sans, sans-serif" font-size="58" font-weight="bold" fill="url(#logo)">R</text>
            </svg>
          </div>
          <Ico n="downg" />
        </div>
        <div class="family">
          <div class="combo"><select aria-label="Family"><option>Family: Mechanical E</option></select><Ico n="thinDn" /></div>
          <button type="button" class="edit" disabled><Ico n="edittype" />Edit Type</button>
        </div>
        <div class="grid">
          <table>
            <colgroup><col class="c1" /><col /></colgroup>
            <tbody v-for="g in groups" :key="g.g">
              <tr class="gh"><th colspan="2"><span>{{ g.g }}<Ico n="chev" /></span></th></tr>
              <tr v-for="r in g.rows" :key="r.k" :class="{ dim: r.dim }">
                <th scope="row"><label :for="r.k">{{ r.k }}</label></th>
                <td :class="{ active: r.active }">
                  <input v-if="r.check !== undefined" :id="r.k" v-model="r.check" type="checkbox" />
                  <input v-else :id="r.k" type="text" :value="r.v ?? ''" :disabled="r.dim" />
                </td>
              </tr>
            </tbody>
          </table>
        </div>
        <footer><a href="#help">Properties help</a><button type="button" disabled>Apply</button></footer>
      </aside>
    </main>

    <footer class="status">
      <span>Click to select, TAB for alternates, CTRL adds, SHIFT unselects.</span>
      <div class="sel"><button v-for="n in selTools" :key="n" type="button" :aria-label="n"><Ico :n="n" /></button><span>:0</span></div>
    </footer>
  </div>
</template>

<style>
body { margin: 0; background: #cbcbcb; }
</style>

<style scoped>
* { box-sizing: border-box; }
.app { display: flex; flex-direction: column; height: 100vh; min-height: 640px; overflow: hidden; font: 11px/18px "Noto Sans", "Open Sans", sans-serif; color: #222; background: #eee; }
button { font: inherit; color: inherit; background: none; border: 0; padding: 0; margin: 0; display: flex; align-items: center; justify-content: center; }
.ico { flex: none; display: block; overflow: visible; }
h1, h2 { font: inherit; margin: 0; }
ul { list-style: none; margin: 0; padding: 0; }

.title { display: flex; align-items: center; height: 29px; padding-bottom: 5px; background: #cbcbcb; flex: none; }
.qat { display: flex; align-items: center; }
.q { width: 24px; height: 22px; }
.q.gap { margin-left: 5px; }
.q.arrow { width: 12px; }
.q.end { width: 22px; }
.q.on { border: 1px solid #2b6aa8; background: #b9d7ef; }
.qsep { width: 1px; height: 22px; margin: 0 2px 0 3px; background: #bababa; }
h1 { flex: 1; text-align: center; color: #333; white-space: nowrap; font: 12px/20px "Open Sans", sans-serif; padding: 0 8px 4px 0; }
.account { display: flex; align-items: center; width: 230px; color: #333; }
.account .sign { gap: 6px; width: 106px; justify-content: flex-start; }
.find, .shop { margin-left: 4px; }
.win { display: flex; width: 124px; justify-content: flex-end; gap: 12px; padding-right: 5px; }
.win button { width: 13px; }

.tabs { display: flex; height: 20px; background: #cbcbcb; flex: none; font: 12px/20px "Open Sans", sans-serif; color: #333; }
.tabs button { padding: 0 9px; white-space: nowrap; }
.tabs .file { width: 45px; background: #2a76ae; color: #fff; margin-right: 3px; }
.tabs .on { background: #eee; color: #111; }
.tabs .mode { padding: 0 20px; }

.ribbon { display: flex; height: 97px; padding-top: 3px; background: #eee; border-bottom: 2px solid #cbcbcb; flex: none; }
.panel { display: flex; flex-direction: column; border-right: 1px solid #dcdcdc; }
.body { height: 73px; }
.plabel { display: flex; align-items: center; justify-content: center; gap: 5px; height: 18px; color: #333; }
.row { display: flex; }
.select { width: 57px; }
.select .body { padding-left: 7px; }
.modify { flex-direction: column; justify-content: flex-start; width: 44px; height: 72px; padding-top: 7px; gap: 7px; border: 1px solid #3a7fb8; background: linear-gradient(#c6dff5, #a9cdee); }
.props { width: 83px; }
.grid2 { display: grid; grid-template: 36px 36px / 40px 36px; padding-left: 3px; }
.grid2 .on { border: 1px solid #3a7fb8; background: #c3dcf3; height: 35px; width: 38px; }
.clip { width: 80px; }
.tall { flex-direction: column; justify-content: flex-start; line-height: 15px; }
.clip .tall { width: 56px; padding-top: 3px; gap: 3px; }
.off { color: #999; }
.stack3 { display: flex; flex-direction: column; justify-content: space-around; }
.geom { width: 108px; }
.geo { display: grid; grid-template: 24px 24px / 65px 36px; padding: 13px 0 0 7px; }
.geo button { justify-content: flex-start; gap: 5px; }
.mod { width: 238px; }
.grid4 { display: grid; grid-template: 36px 36px / repeat(4, 39px); padding-left: 2px; }
.grid3 { display: grid; grid-template: repeat(3, 24px) / repeat(3, 25px); padding-left: 2px; }
.meas { width: 57px; }
.two { display: grid; grid-template: 36px 36px / 1fr; }
.two button { gap: 5px; }
.crea { width: 43px; }
.fam { margin-left: 2px; border: 0; }
.fam .tall { padding-top: 2px; gap: 3px; }
.fam .tall:first-child { width: 58px; }
.fam .tall:last-child { width: 98px; }
.fam .plabel { background: #c5c5e0; }
.options { height: 27px; background: #eee; border-bottom: 2px solid #cbcbcb; flex: none; }

.work { flex: 1; display: flex; min-height: 0; background: #eee; }
.browser { width: 267px; display: flex; flex-direction: column; border-right: 2px solid #cbcbcb; padding-right: 1px; flex: none; }
.phead { display: flex; align-items: center; justify-content: space-between; height: 20px; padding: 0 3px; background: #eee; color: #333; flex: none; }
.palette .phead { padding-right: 2px; }
.tree { flex: 1; background: #fff; padding-left: 9px; color: #111; }
.tree ul { margin-left: 20px; }
.tree li { position: relative; }
.tree li::before { content: ""; position: absolute; left: 0; top: 0; bottom: 0; border-left: 1px dotted #999; }
.tree li:last-child::before { bottom: auto; height: 9px; }
.tree > li:first-child::before { top: 9px; }
.node { display: flex; align-items: center; height: 18px; position: relative; }
.tog { width: 9px; height: 9px; margin-left: -4px; border: 1px solid #8f99ad; background: linear-gradient(#444, #444) center / 5px 1px no-repeat #fff; }
.tog.plus { background: linear-gradient(#444, #444) center / 5px 1px no-repeat, linear-gradient(#444, #444) center / 1px 5px no-repeat #fff; }
.node i { border-top: 1px dotted #999; }
.s7 { width: 7px; }
.s10 { width: 10px; }
.s12 { width: 12px; }
.s15 { width: 15px; }
.lb { padding: 0 3px; }
.lb.top { padding-left: 6px; }
.lb.sel { background: #dedede; }
.lb.bold { font-weight: 700; }

.view { flex: 1; min-width: 0; display: flex; flex-direction: column; background: #fff; border-right: 2px solid #cbcbcb; }
.vtabs { display: flex; height: 20px; background: #cbcbcb; color: #444; flex: none; }
.vtab { display: flex; align-items: center; width: 128px; gap: 7px; padding: 0 4px; }
.vtab.on { background: #fff; font-weight: 700; color: #222; }
.vtab.on button { margin-left: auto; }
.vmore { margin-left: auto; width: 20px; }
.stage { flex: 1; display: flex; min-height: 0; }
.canvas { flex: 1; position: relative; overflow: hidden; }
.scene { display: block; width: 100%; height: 100%; }
.cube { position: absolute; right: 17px; top: 28px; }
.navbar { position: absolute; right: 0; top: 122px; height: 118px; width: 36px; border: 2px solid #c8c8c8; border-radius: 5px; background: #f7f7f7; display: flex; align-items: center; justify-content: center; }
.vscroll { width: 20px; display: flex; flex-direction: column; align-items: center; justify-content: space-between; padding: 7px 2px 7px 0; background: #f0f0f0; }
.vscroll .thumb, .hscroll .thumb { width: 16px; height: 16px; background: #cdcdcd; }
.vbar { display: flex; align-items: center; height: 19px; background: #f0f0f0; border-bottom: 2px solid #fff; flex: none; }
.scale { width: 78px; padding-left: 28px; color: #111; }
.vbar button { width: 21px; }
.hscroll { flex: 1; display: flex; align-items: center; justify-content: space-between; padding: 0 4px 0 5px; }

.palette { width: 218px; flex: none; display: flex; flex-direction: column; padding-left: 2px; background: #eee; }
.type { display: flex; align-items: center; justify-content: space-between; height: 72px; padding-left: 3px; border-top: 1px solid #ddd; background: linear-gradient(90deg, #f4f4f4, #e6e6e6); }
.thumbnail { border: 1px solid #ddd; }
.thumbnail svg { display: block; overflow: visible; }
.family { display: flex; height: 25px; gap: 5px; align-items: center; }
.combo { display: grid; align-items: center; width: 134px; }
.combo > * { grid-area: 1 / 1; }
.combo .ico { justify-self: end; margin-right: 3px; pointer-events: none; }
select { appearance: none; font: inherit; width: 100%; height: 23px; padding: 0 0 0 3px; color: #111; background: #e1e1e1; border: 1px solid #999; border-radius: 0; }
.edit { gap: 5px; color: #999; }
.grid { flex: 1; background: #fff; min-height: 0; }
table { width: 100%; border-collapse: separate; border-spacing: 0; table-layout: fixed; color: #111; }
.c1 { width: 108px; }
th, td { padding: 0; height: 18px; text-align: left; font-weight: 400; line-height: 17px; white-space: nowrap; }
tr:not(.gh) th { padding-left: 8px; border-bottom: 1px dotted #777; border-right: 1px dotted #777; }
td { border-bottom: 1px dotted #777; }
td.active { box-shadow: inset 0 0 0 1px #000; }
.gh th { background: #dadada; padding: 0 5px 0 2px; }
.gh span { display: flex; align-items: center; justify-content: space-between; }
.dim { color: #888; }
td input[type="text"] { display: block; width: 100%; height: 16px; border: 0; padding: 0 3px; font: inherit; line-height: 16px; color: inherit; background: transparent; }
input[type="checkbox"] { appearance: none; display: block; width: 13px; height: 13px; margin: 2px 0 0 3px; border: 1px solid #333; background: #fff; }
input[type="checkbox"]:checked::after { content: ""; display: block; width: 8px; height: 4px; margin: 2px 0 0 1px; border: solid #333; border-width: 0 0 1px 1px; transform: rotate(-45deg); }
.palette footer { display: flex; align-items: center; justify-content: space-between; height: 28px; padding: 0 2px; }
.palette a { color: #1c64b4; }
.palette footer button { width: 73px; height: 21px; border: 1px solid #b9b9b9; background: #cbcbcb; color: #888; }

.status { display: flex; align-items: center; justify-content: space-between; height: 26px; flex: none; padding: 0 72px 0 1px; background: #cbcbcb; border-bottom: 2px solid #20242e; color: #111; }
.sel { display: flex; align-items: center; }
.sel button { width: 26px; height: 18px; }
.sel span { margin-left: -4px; }
</style>
